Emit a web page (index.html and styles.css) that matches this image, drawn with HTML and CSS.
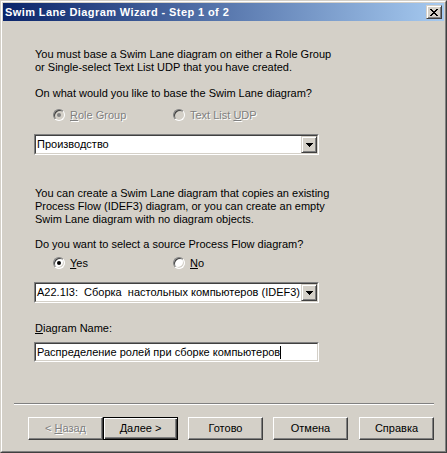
FILE: index.html
```html
<!DOCTYPE html>
<html>
<head>
<meta charset="utf-8">
<link rel="stylesheet" href="styles.css">
</head>
<body>
<div class="win">
  <div class="win-inner">
    <div class="titlebar">
      <span class="title">Swim Lane Diagram Wizard - Step 1 of 2</span>
      <span class="close-btn">
        <svg width="8" height="7" viewBox="0 0 8 7" shape-rendering="crispEdges">
          <rect x="0" y="0" width="2" height="1"/><rect x="6" y="0" width="2" height="1"/>
          <rect x="1" y="1" width="2" height="1"/><rect x="5" y="1" width="2" height="1"/>
          <rect x="2" y="2" width="4" height="1"/>
          <rect x="3" y="3" width="2" height="1"/>
          <rect x="2" y="4" width="4" height="1"/>
          <rect x="1" y="5" width="2" height="1"/><rect x="5" y="5" width="2" height="1"/>
          <rect x="0" y="6" width="2" height="1"/><rect x="6" y="6" width="2" height="1"/>
        </svg>
      </span>
    </div>

    <div class="content">
      <p class="text p1">You must base a Swim Lane diagram on either a Role Group<br>or Single-select Text List UDP that you have created.</p>
      <p class="text q1">On what would you like to base the Swim Lane diagram?</p>
      <div class="radios r1">
        <div class="radio disabled checked"><span class="dot"></span><span class="etched"><u>R</u>ole Group</span></div>
        <div class="radio disabled"><span class="dot"></span><span class="etched">Text List <u>U</u>DP</span></div>
      </div>
      <div class="combo c1">
        <div class="combo-in">
          <span class="combo-text">Производство</span>
          <span class="drop">
            <svg width="7" height="4" viewBox="0 0 7 4" shape-rendering="crispEdges">
              <rect x="0" y="0" width="7" height="1"/><rect x="1" y="1" width="5" height="1"/>
              <rect x="2" y="2" width="3" height="1"/><rect x="3" y="3" width="1" height="1"/>
            </svg>
          </span>
        </div>
      </div>

      <p class="text p2">You can create a Swim Lane diagram that copies an existing<br>Process Flow (IDEF3) diagram, or you can create an empty<br>Swim Lane diagram with no diagram objects.</p>
      <p class="text q2">Do you want to select a source Process Flow diagram?</p>
      <div class="radios r2">
        <div class="radio checked"><span class="dot"></span><span><u>Y</u>es</span></div>
        <div class="radio"><span class="dot"></span><span><u>N</u>o</span></div>
      </div>
      <div class="combo c2">
        <div class="combo-in">
          <span class="combo-text">A22.1I3:  Сборка  настольных компьютеров (IDEF3)</span>
          <span class="drop">
            <svg width="7" height="4" viewBox="0 0 7 4" shape-rendering="crispEdges">
              <rect x="0" y="0" width="7" height="1"/><rect x="1" y="1" width="5" height="1"/>
              <rect x="2" y="2" width="3" height="1"/><rect x="3" y="3" width="1" height="1"/>
            </svg>
          </span>
        </div>
      </div>

      <p class="text lbl"><u>D</u>iagram Name:</p>
      <div class="field">
        <div class="field-in"><span class="field-text">Распределение ролей при сборке компьютеров</span><span class="caret"></span></div>
      </div>
    </div>

    <div class="footer">
      <div class="sep"></div>
      <div class="buttons">
        <div class="btn"><span class="etched">&lt; <u>Н</u>азад</span></div>
        <div class="btn default"><span>Далее &gt;</span></div>
        <div class="btn gap"><span>Готово</span></div>
        <div class="btn gap"><span>Отмена</span></div>
        <div class="btn gap2"><span>Справка</span></div>
      </div>
    </div>
  </div>
</div>
</body>
</html>
```
FILE: styles.css
```css
* { box-sizing: border-box; }
html, body { margin: 0; padding: 0; }
body {
  width: 447px;
  height: 453px;
  overflow: hidden;
  background: #d4d0c8;
  font-family: "Liberation Sans", Arial, sans-serif;
  font-size: 11px;
  line-height: 13px;
  color: #000;
}
u { text-underline-offset: 1px; }

.win {
  width: 447px;
  height: 453px;
  border: 1px solid;
  border-color: #d4d0c8 #404040 #404040 #d4d0c8;
}
.win-inner {
  height: 100%;
  border: 1px solid;
  border-color: #fff #808080 #808080 #fff;
  padding: 1px;
  display: flex;
  flex-direction: column;
  background: #d4d0c8;
}

.titlebar {
  height: 18px;
  flex: none;
  display: flex;
  align-items: center;
  justify-content: space-between;
  padding: 0 2px 0 2px;
  background: linear-gradient(to right, #0a246a, #a6caf0);
}
.title {
  color: #fff;
  font-weight: bold;
  font-size: 11px;
  letter-spacing: 0.4px;
}
.close-btn {
  width: 16px;
  height: 14px;
  background: #d4d0c8;
  border: 1px solid;
  border-color: #d4d0c8 #404040 #404040 #d4d0c8;
  box-shadow: inset 1px 1px #fff, inset -1px -1px #808080;
  display: flex;
  align-items: center;
  justify-content: center;
}
.close-btn svg { display: block; fill: #000; }

.content { padding-left: 31px; }
.text { margin: 0; padding-left: 1px; }
.p1 { margin-top: 27px; }
.q1 { margin-top: 13px; }
.r1 { margin-top: 9px; }
.c1 { margin-top: 12px; }
.p2 { margin-top: 32px; }
.q2 { margin-top: 12px; }
.r2 { margin-top: 6px; }
.c2 { margin-top: 12px; }
.lbl { margin-top: 19px; }
.field { margin-top: 7px; }

.radios {
  display: grid;
  grid-template-columns: 120px auto;
  margin-left: 19px;
  height: 13px;
}
.radio {
  display: flex;
  align-items: flex-start;
  gap: 5px;
}
.dot {
  width: 12px;
  height: 12px;
  border-radius: 50%;
  border: 1px solid;
  border-color: #808080 #fff #fff #808080;
  box-shadow: inset 1px 1px #404040, inset -1px -1px #d4d0c8;
  background: #fff;
  display: flex;
  align-items: center;
  justify-content: center;
  flex: none;
}
.radio.checked .dot::after {
  content: "";
  width: 4px;
  height: 4px;
  border-radius: 50%;
  background: #000;
}
.radio.disabled .dot { background: #d4d0c8; }
.radio.disabled.checked .dot::after { background: #808080; }

.etched {
  color: #808080;
  text-shadow: 1px 1px 0 #fff;
}

.combo, .field {
  width: 285px;
  height: 21px;
  border: 1px solid;
  border-color: #808080 #fff #fff #808080;
}
.field { height: 20px; }
.combo-in, .field-in {
  height: 100%;
  border: 1px solid;
  border-color: #404040 #d4d0c8 #d4d0c8 #404040;
  background: #fff;
  display: flex;
  align-items: center;
}
.combo-text, .field-text {
  flex: 1;
  padding-left: 1px;
  white-space: pre;
  overflow: hidden;
}
.field-text { flex: none; }
.caret {
  width: 1px;
  height: 13px;
  background: #000;
}
.drop {
  width: 16px;
  height: 17px;
  flex: none;
  background: #d4d0c8;
  border: 1px solid;
  border-color: #d4d0c8 #404040 #404040 #d4d0c8;
  box-shadow: inset 1px 1px #fff, inset -1px -1px #808080;
  display: flex;
  align-items: center;
  justify-content: center;
}
.drop svg { display: block; fill: #000; }

.footer { margin-top: auto; padding-bottom: 10px; }
.sep {
  margin: 0 10px 0 11px;
  height: 2px;
  border-top: 1px solid #808080;
  border-bottom: 1px solid #fff;
}
.buttons {
  display: flex;
  margin-top: 12px;
  padding-left: 25px;
}
.btn {
  width: 75px;
  height: 23px;
  border: 1px solid;
  border-color: #fff #404040 #404040 #fff;
  box-shadow: inset -1px -1px #808080;
  background: #d4d0c8;
  display: flex;
  align-items: center;
  justify-content: center;
}
.btn.default {
  border-color: #000;
  box-shadow: inset 1px 1px #fff, inset -1px -1px #404040, inset -2px -2px #808080;
}
.btn.gap { margin-left: 10px; }
.btn.gap2 { margin-left: 11px; }
```
